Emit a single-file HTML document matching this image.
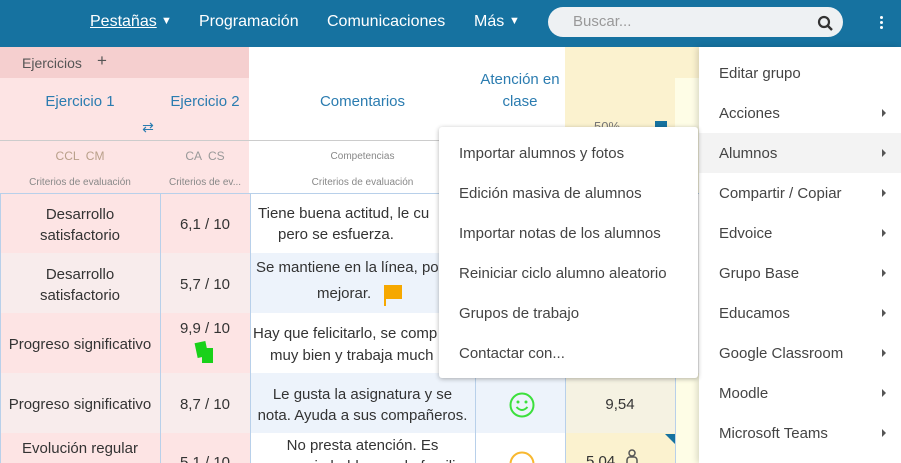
<!DOCTYPE html>
<html><head><meta charset="utf-8"><style>
*{margin:0;padding:0;box-sizing:border-box}
html,body{width:901px;height:463px;overflow:hidden}
body{position:relative;background:#fff;font-family:"Liberation Sans",sans-serif;color:#333}
.a{position:absolute}
.c{position:absolute;display:flex;align-items:center;justify-content:center;text-align:center;font-size:15px;line-height:21px;color:#333}
.nav{left:0;top:0;width:901px;height:47px;background:#1672a0}
.nav span{position:absolute;top:13px;color:#fff;font-size:16px}
.h{color:#2b7cb0;font-size:15px}
.s{font-size:10px;color:#888}
.m{position:absolute;font-size:15px;color:#444}
.arr{position:absolute;left:882px;width:0;height:0;border-top:4px solid transparent;border-bottom:4px solid transparent;border-left:4px solid #555}
</style></head><body>
<div class="a nav">
<span style="left:90px;text-decoration:underline">Pestañas</span><span style="left:161px;top:15px;font-size:11px">▼</span>
<span style="left:199px">Programación</span>
<span style="left:327px">Comunicaciones</span>
<span style="left:474px">Más</span><span style="left:509px;top:15px;font-size:11px">▼</span>
<div class="a" style="left:548px;top:7px;width:295px;height:30px;background:#eef1f3;border-radius:15px"></div>
<span style="left:573px;top:13px;color:#999;font-size:15px">Buscar...</span>
<svg class="a" style="left:817px;top:15px" width="16" height="16"><circle cx="7" cy="7" r="5" fill="none" stroke="#333" stroke-width="2.2"/><path d="M11 11l4 4" stroke="#333" stroke-width="2.4"/></svg>
<div class="a" style="left:880px;top:16px;width:3px;height:3px;background:#fff;border-radius:2px;box-shadow:0 5px 0 #fff,0 10px 0 #fff"></div>
</div>
<div class="a" style="left:0;top:47px;width:249px;height:31px;background:#f5cfcf"></div>
<div class="a" style="left:0;top:78px;width:249px;height:115px;background:#fde4e4"></div>
<div class="a" style="left:565px;top:47px;width:135px;height:146px;background:#fbf2cf"></div>
<div class="a" style="left:675px;top:78px;width:25px;height:115px;background:#fefde6"></div>
<div class="a" style="left:0;top:140px;width:565px;height:1px;background:#ccc"></div>
<div class="a" style="left:22px;top:55px;font-size:14px;color:#555">Ejercicios</div>
<div class="a" style="left:97px;top:51px;font-size:17px;color:#555">+</div>
<div class="c h" style="left:0;top:91px;width:160px">Ejercicio 1</div>
<div class="c h" style="left:160px;top:91px;width:90px">Ejercicio 2</div>
<div class="c h" style="left:140px;top:117px;width:16px;font-size:14px">⇄</div>
<div class="c h" style="left:250px;top:91px;width:225px">Comentarios</div>
<div class="c h" style="left:475px;top:69px;width:90px;line-height:22px">Atención en<br>clase</div>
<div class="a" style="left:594px;top:119px;font-size:13px;color:#777">50%</div>
<div class="a" style="left:655px;top:121px;width:12px;height:8px;background:#1672a0"></div>
<div class="c" style="left:0;top:146px;width:160px;font-size:12px;color:#b9a08a">CCL &nbsp;CM</div>
<div class="c" style="left:160px;top:146px;width:90px;font-size:12px;color:#999">CA &nbsp;CS</div>
<div class="c s" style="left:250px;top:146px;width:225px">Competencias</div>
<div class="c s" style="left:0;top:172px;width:160px">Criterios de evaluación</div>
<div class="c s" style="left:160px;top:172px;width:90px">Criterios de ev...</div>
<div class="c s" style="left:250px;top:172px;width:225px">Criterios de evaluación</div>
<div class="a" style="left:0;top:193px;width:250px;height:270px;background:#fde4e4"></div>
<div class="a" style="left:0;top:253px;width:250px;height:60px;background:#f8ecec"></div>
<div class="a" style="left:0;top:373px;width:250px;height:60px;background:#f8ecec"></div>
<div class="a" style="left:250px;top:253px;width:225px;height:60px;background:#edf3fb"></div>
<div class="a" style="left:250px;top:373px;width:315px;height:60px;background:#edf3fb"></div>
<div class="a" style="left:565px;top:373px;width:110px;height:60px;background:#f5f2e2"></div>
<div class="a" style="left:565px;top:433px;width:110px;height:30px;background:#fbf2cf"></div>
<div class="a" style="left:675px;top:373px;width:25px;height:90px;background:#fefde6"></div>
<div class="a" style="left:0;top:193px;width:700px;height:1px;background:#b8d0ea"></div>
<div class="a" style="left:0;top:193px;width:1px;height:270px;background:#b8d0ea"></div>
<div class="a" style="left:160px;top:193px;width:1px;height:270px;background:#b8d0ea"></div>
<div class="a" style="left:250px;top:193px;width:1px;height:270px;background:#b8d0ea"></div>
<div class="a" style="left:475px;top:373px;width:1px;height:90px;background:#b8d0ea"></div>
<div class="a" style="left:565px;top:373px;width:1px;height:90px;background:#b8d0ea"></div>
<div class="a" style="left:675px;top:373px;width:1px;height:90px;background:#b8d0ea"></div>
<div class="c" style="left:0;top:204px;width:160px">Desarrollo<br>satisfactorio</div>
<div class="c" style="left:160px;top:214px;width:90px">6,1 / 10</div>
<div class="a" style="left:258px;top:205px;font-size:15px;white-space:nowrap">Tiene buena actitud, le cu</div>
<div class="a" style="left:278px;top:226px;font-size:15px;white-space:nowrap">pero se esfuerza.</div>
<div class="c" style="left:0;top:264px;width:160px">Desarrollo<br>satisfactorio</div>
<div class="c" style="left:160px;top:274px;width:90px">5,7 / 10</div>
<div class="a" style="left:256px;top:259px;font-size:15px;white-space:nowrap">Se mantiene en la línea, po</div>
<div class="a" style="left:317px;top:285px;font-size:15px">mejorar.</div>
<div class="a" style="left:384px;top:285px;width:18px;height:14px;background:#f6a800"></div>
<div class="a" style="left:384px;top:285px;width:2px;height:21px;background:#f6a800"></div>
<div class="c" style="left:0;top:334px;width:160px">Progreso significativo</div>
<div class="c" style="left:160px;top:318px;width:90px">9,9 / 10</div>
<div class="a" style="left:196px;top:342px;width:11px;height:15px;background:#19d119;transform:rotate(-12deg)"></div>
<div class="a" style="left:202px;top:348px;width:11px;height:15px;background:#19d119"></div>
<div class="a" style="left:253px;top:325px;font-size:15px;white-space:nowrap">Hay que felicitarlo, se comp</div>
<div class="a" style="left:270px;top:347px;font-size:15px;white-space:nowrap">muy bien y trabaja much</div>
<div class="c" style="left:0;top:394px;width:160px">Progreso significativo</div>
<div class="c" style="left:160px;top:394px;width:90px">8,7 / 10</div>
<div class="c" style="left:250px;top:384px;width:225px">Le gusta la asignatura y se<br>nota. Ayuda a sus compañeros.</div>
<svg class="a" style="left:508px;top:391px" width="28" height="28"><circle cx="14" cy="14" r="11.5" fill="none" stroke="#3ce03c" stroke-width="2"/><circle cx="10" cy="11" r="1.5" fill="#3ce03c"/><circle cx="18" cy="11" r="1.5" fill="#3ce03c"/><path d="M8.5 16q5.5 6 11 0" fill="none" stroke="#3ce03c" stroke-width="2"/></svg>
<div class="c" style="left:565px;top:394px;width:110px">9,54</div>
<div class="a" style="left:665px;top:434px;width:0;height:0;border-top:10px solid #1672a0;border-left:10px solid transparent"></div>
<div class="c" style="left:0;top:438px;width:160px">Evolución regular</div>
<div class="c" style="left:160px;top:452px;width:90px">5,1 / 10</div>
<div class="c" style="left:250px;top:435px;width:225px">No presta atención. Es<br>necesario hablar con la familia</div>
<svg class="a" style="left:508px;top:450px" width="28" height="28"><circle cx="14" cy="14" r="11.5" fill="none" stroke="#f8b830" stroke-width="2"/></svg>
<div class="a" style="left:586px;top:453px;font-size:15px">5,04</div>
<svg class="a" style="left:624px;top:448px" width="20" height="18"><circle cx="8" cy="5" r="3" fill="none" stroke="#555" stroke-width="1.5"/><rect x="3" y="9" width="10" height="9" rx="3" fill="none" stroke="#555" stroke-width="1.5"/></svg>
<div class="a" style="left:699px;top:47px;width:202px;height:416px;background:#fff;box-shadow:-2px 0 6px rgba(0,0,0,.15)"></div>
<div class="a" style="left:699px;top:133px;width:202px;height:40px;background:#f3f3f3"></div>
<div class="m" style="left:719px;top:65px">Editar grupo</div>
<div class="m" style="left:719px;top:105px">Acciones</div><div class="arr" style="top:109px"></div>
<div class="m" style="left:719px;top:145px">Alumnos</div><div class="arr" style="top:149px"></div>
<div class="m" style="left:719px;top:185px">Compartir / Copiar</div><div class="arr" style="top:189px"></div>
<div class="m" style="left:719px;top:225px">Edvoice</div><div class="arr" style="top:229px"></div>
<div class="m" style="left:719px;top:265px">Grupo Base</div><div class="arr" style="top:269px"></div>
<div class="m" style="left:719px;top:305px">Educamos</div><div class="arr" style="top:309px"></div>
<div class="m" style="left:719px;top:345px">Google Classroom</div><div class="arr" style="top:349px"></div>
<div class="m" style="left:719px;top:385px">Moodle</div><div class="arr" style="top:389px"></div>
<div class="m" style="left:719px;top:425px">Microsoft Teams</div><div class="arr" style="top:429px"></div>
<div class="a" style="left:439px;top:127px;width:259px;height:251px;background:#fff;border-radius:3px;box-shadow:0 1px 5px rgba(0,0,0,.3)"></div>
<div class="m" style="left:459px;top:145px">Importar alumnos y fotos</div>
<div class="m" style="left:459px;top:185px">Edición masiva de alumnos</div>
<div class="m" style="left:459px;top:225px">Importar notas de los alumnos</div>
<div class="m" style="left:459px;top:265px">Reiniciar ciclo alumno aleatorio</div>
<div class="m" style="left:459px;top:305px">Grupos de trabajo</div>
<div class="m" style="left:459px;top:345px">Contactar con...</div>
</body></html>
